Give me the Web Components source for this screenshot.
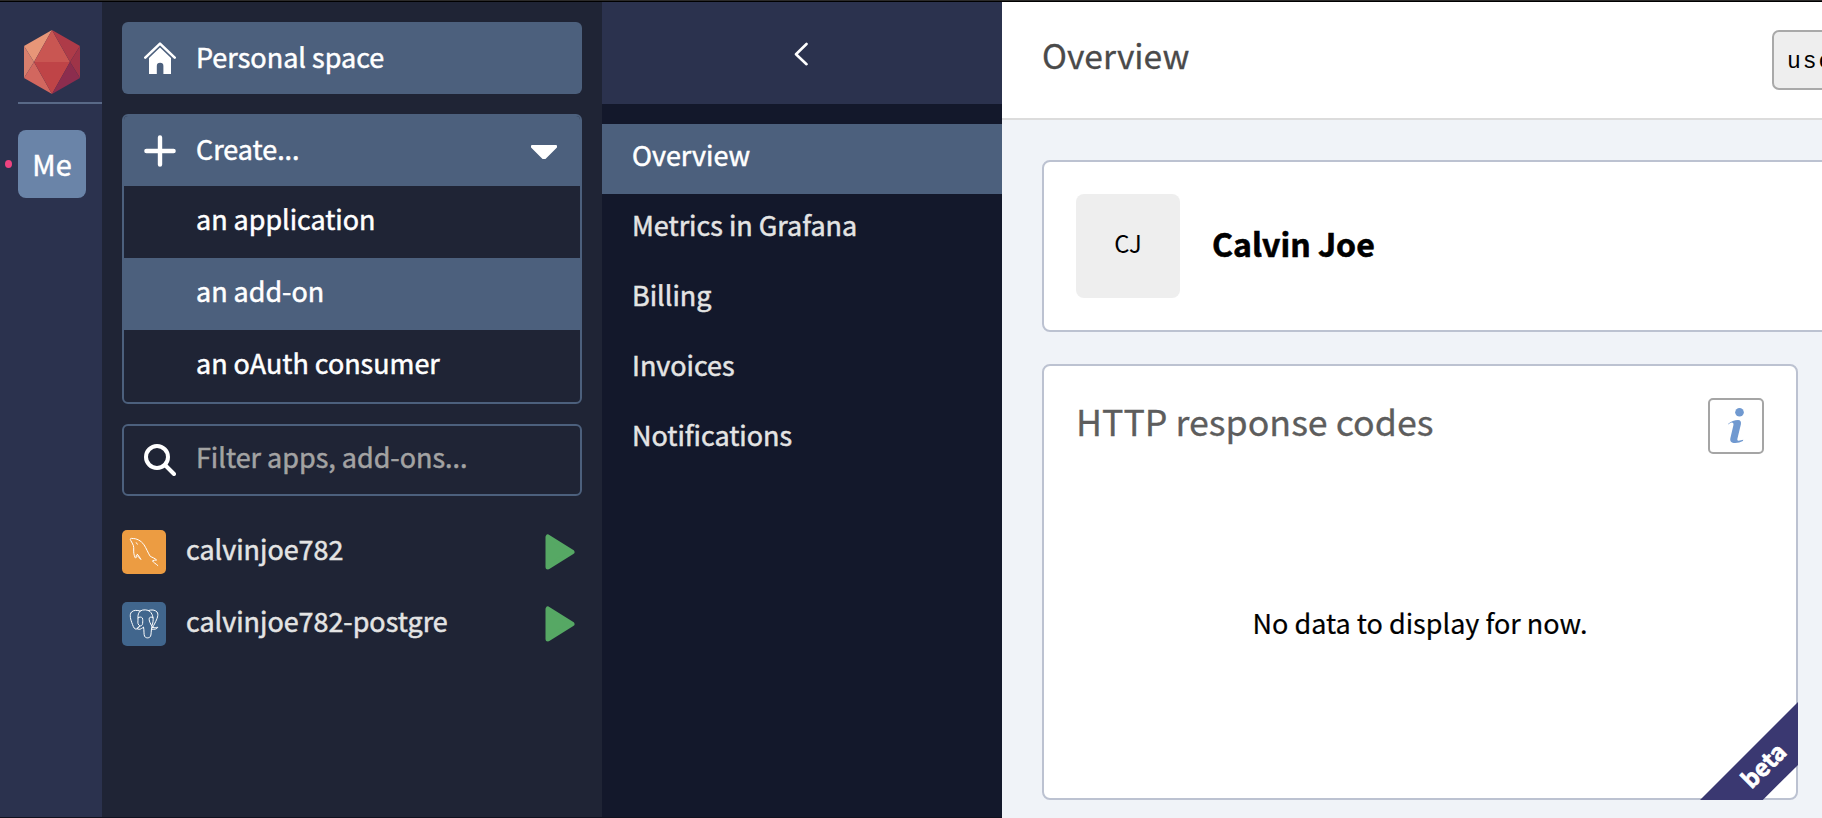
<!DOCTYPE html>
<html lang="en">
<head>
<meta charset="utf-8">
<title>Overview</title>
<style>
html,body{margin:0;height:100%;overflow:hidden}
body{font-family:"Noto Sans CJK SC","Noto Sans",sans-serif}
</style>
</head>
<body>
<console-app></console-app>
<script>
const define=(name,html)=>customElements.define(name,class extends HTMLElement{
  constructor(){super();const t=document.createElement('template');t.innerHTML=html;
  this.attachShadow({mode:'open'}).append(t.content.cloneNode(true));}
});

define('org-rail',`<style>
:host{display:flex;flex-direction:column;width:102px;background:#2b324e;flex:none;-webkit-text-stroke:.5px}
.logo{width:56px;height:64px;margin:28px 0 8px 24px;display:block}
hr{margin:0 0 26px 18px;border:0;height:2px;background:#596987}
.row{display:flex;align-items:center}
.dot{width:7px;height:8px;border-radius:50%;background:#ee4380;margin:-1px 6px 0 5px}
.me{width:68px;height:68px;box-sizing:border-box;border-radius:8px;background:#6a84a8;color:#fff;font-size:28.8px;line-height:68px;text-align:center}
</style>
<svg class="logo" viewBox="0 0 56 64"><path fill="#e79678" d="M28 0 0 16l10 16z"/><path fill="#d87f6d" d="M0 16v32l10-16z"/><path fill="#d2675f" d="M0 48l10-16 18 32z"/><path fill="#c95652" d="M28 0 10 32h36z"/><path fill="#bf4447" d="M10 32h36L28 64z"/><path fill="#ae3b48" d="M28 0l28 16-10 16z"/><path fill="#9f3448" d="M56 16v32L46 32z"/><path fill="#8c2d4e" d="M56 48 46 32 28 64z"/></svg>
<hr><div class="row"><span class="dot"></span><div class="me">Me</div></div>`);

define('space-button',`<style>
:host{display:flex;align-items:center;height:72px;box-sizing:border-box;background:#4c607d;border-radius:6px;color:#fff;padding-left:22px}
svg{width:32px;height:32px;margin-right:20px}
span{font-size:27px;line-height:68px;padding-bottom:3px}
</style>
<svg viewBox="0 0 32 32"><path fill="none" stroke="#fff" stroke-width="2.6" stroke-linecap="round" stroke-linejoin="round" d="M1.3 15.6 16 1.6l14.7 14"/><path fill="#fff" d="M16 5.4 5 16v16h7.800v-8a3.200 3.200 0 0 1 6.600 0v8H27V16z"/></svg><span><slot></slot></span>`);

define('create-menu',`<style>
:host{display:block;border:2px solid #4c607d;border-radius:6px;box-sizing:border-box;height:290px;color:#fff;overflow:hidden}
.head{display:flex;align-items:center;height:70px;background:#4c607d;padding:0 22px 0 20px}
.plus{width:32px;height:32px;margin-right:20px}
.head span{flex:1}
span{display:block;font-size:26.900px;line-height:66px;padding-bottom:4px}
.caret{width:28px;height:16px;margin-top:2px}
.item{height:72px;padding-left:72px}
.item span{line-height:66px}
.on{background:#4c607d}
</style>
<div class="head"><svg class="plus" viewBox="0 0 32 32"><path stroke="#fff" stroke-width="4.400" stroke-linecap="round" d="M16 2.400v27.200M2.400 16h27.200"/></svg><span>Create...</span>
<svg class="caret" viewBox="0 0 28 16"><path fill="#fff" stroke="#fff" stroke-width="2" stroke-linejoin="round" d="M2 2h24v1L15 14h-2L2 3z"/></svg></div>
<div class="item"><span>an application</span></div><div class="item on"><span>an add-on</span></div><div class="item"><span>an oAuth consumer</span></div>`);

define('filter-box',`<style>
:host{display:flex;align-items:center;height:72px;box-sizing:border-box;border:2px solid #4c607d;border-radius:6px;color:#a3a3a3;padding-left:20px}
svg{width:32px;height:32px;margin-right:20px}
span{font-size:26.950px;line-height:62px;padding-bottom:6px}
</style>
<svg viewBox="0 0 32 32" fill="none" stroke="#fff" stroke-width="4" stroke-linecap="round"><circle cx="13" cy="13" r="11"/><path d="M21 21l9 9"/></svg><span><slot></slot></span>`);

define('app-row',`<style>
:host{display:flex;align-items:center;height:72px;color:#e4e4e4}
.icon{width:44px;height:44px;margin-right:20px;display:flex}
span{flex:1;font-size:26.900px;line-height:62px;padding-bottom:6px}
.play{width:30px;height:36px;margin-right:7px}
</style>
<div class="icon"><slot name="icon"></slot></div><span><slot></slot></span>
<svg class="play" viewBox="0 0 30 36"><path fill="#56a864" stroke="#56a864" stroke-width="5" stroke-linejoin="round" d="M3 3v30l24-15z"/></svg>`);

define('mysql-icon',`<style>:host{display:block;width:44px;height:44px;background:#ec9c42;border-radius:5px}svg{display:block}</style>
<svg width="44" height="44" viewBox="0 0 44 44" fill="none" stroke="#fff" stroke-width="1" stroke-linejoin="round" stroke-linecap="round"><path d="M10.500 8.500c-2-.6-2.800.4-1.800 1.900 1.200 2 1.900 3.400 2.600 5 .5 1.500.5 2.700.4 4.600-.1 2.600.2 4.900 1.400 7.500.6 1 1 .6 1.100-.4.100-.9 0-1.600.2-2.100 1.500 1 2.600 2.500 4.500 4.500-1-2.200-2.300-3.900-3.600-5.300M10.500 8.500c3.800-.2 8.500 2 11.500 6.300 2.400 3.500 4.200 8.600 6.300 11.600 2.200 1.100 4.500 1.800 6.300 3.600-1.600.2-3.100.1-4.100.8.700 1.700 3.500 3 5.300 4.700M14.300 12.700l1 1.500"/></svg>`);

define('postgres-icon',`<style>:host{display:block;width:44px;height:44px;background:#41668d;border-radius:5px}svg{display:block}</style>
<svg width="44" height="44" viewBox="0 0 44 44" fill="none" stroke="#fff" stroke-width="1" stroke-linejoin="round" stroke-linecap="round"><path d="M18 9c-3-1-6.500-1-8.500 1-2.300 2.500-1 7.500 1 12.500 1 3 2.200 4.800 3.600 4.600 1.200-.2 2.400-2 3.400-3.100M18.500 8.800C21 7.200 26 7.600 28 9.500c3 3 4.500 8.500 1.800 14.500M18.500 8.800c-2 1.600-2.800 4.200-2.500 7.200.2 3-.8 5.500.8 7 1.600 2 3.600.5 3.800-1.500.2-2.500.3-3.500-.2-5.500-1.200-1.300-3-1.200-4.300-.2M26.500 8.500c3-1 6.500-.8 8.500 1.500 2 2.500 0 7-2 11-1 2-2 3.600-2.600 4.800M31 15.500c-1.500-.9-3.500-.4-3.700.7-.4 2 .3 3.800 1.400 5.800.6 1.200 1.200 2.500 2.200 3.500 1.600.6 3.600-.3 4.900-.2-1 1.900-3.600 2.300-6 1.900M17.500 24c-.2 1.500-1 2-2.500 2.500 1.500 1.500 4 .9 6.500-1.500.8 3.600.1 7 1.100 9.300 1.300 2.100 4.400 2 5.800.2 1-1.500.5-5 1.400-9.500"/></svg>`);

define('resource-panel',`<style>
:host{display:flex;flex-direction:column;gap:20px;width:500px;flex:none;box-sizing:border-box;padding:20px;background:#1f2435;-webkit-text-stroke:.5px}
</style>
<space-button>Personal space</space-button><create-menu></create-menu><filter-box>Filter apps, add-ons...</filter-box>
<div><app-row><mysql-icon slot="icon"></mysql-icon>calvinjoe782</app-row><app-row><postgres-icon slot="icon"></postgres-icon>calvinjoe782-postgre</app-row></div>`);

define('nav-item',`<style>
:host{display:block;height:70px;box-sizing:border-box;padding-left:30px;font-size:26.950px;line-height:62px;color:#e4e4e4}
:host([active]){background:#4c607d;color:#fff}
</style><slot></slot>`);

define('section-nav',`<style>
:host{display:block;width:400px;flex:none;background:#13182b;-webkit-text-stroke:.5px}
.top{height:102px;background:#2b324e;margin-bottom:20px;display:flex;justify-content:center}
svg{width:16px;height:24px;margin:40px 2px 0 0}
</style>
<div class="top"><svg viewBox="0 0 16 24"><path fill="none" stroke="#fff" stroke-width="2.600" stroke-linecap="round" stroke-linejoin="round" d="M13.500 2 3 12.200l10.500 10"/></svg></div>
<nav-item active>Overview</nav-item><nav-item>Metrics in Grafana</nav-item><nav-item>Billing</nav-item><nav-item>Invoices</nav-item><nav-item>Notifications</nav-item>`);

define('page-header',`<style>
:host{display:flex;height:118px;box-sizing:border-box;background:#fff;border-bottom:2px solid #dcdcdc;padding-left:40px;overflow:hidden}
h1{margin:0;width:730px;flex:none;font-weight:400;font-size:33.600px;line-height:106px;color:#4a4a4a;-webkit-text-stroke:.3px}
.id{margin-top:28px;width:200px;height:60px;flex:none;box-sizing:border-box;border:2px solid #a9a9a9;border-radius:7px;background:#eee;padding-left:13px;font:23px/60px "Liberation Mono",monospace;letter-spacing:2px;color:#000}
</style><h1>Overview</h1><div class="id">use</div>`);

define('owner-card',`<style>
:host{display:flex;align-items:center;width:900px;height:172px;box-sizing:border-box;border:2px solid #bcc2d1;border-radius:8px;background:#fff;padding-left:32px;color:#000}
.av{width:104px;height:104px;border-radius:8px;background:#eee;text-align:center;font-size:23.800px;line-height:98px}
b{margin-left:32px;font-size:32px;line-height:60px;padding-bottom:6px;-webkit-text-stroke:.6px}
</style><div class="av">CJ</div><b>Calvin Joe</b>`);

define('beta-ribbon',`<style>
:host{display:block;position:absolute;right:-2px;bottom:-2px;width:98px;height:98px;clip-path:polygon(0 100%,100% 0,100% 64.300%,64% 100%)}
div{width:98px;height:98px;background:#3a3871;display:flex;align-items:center;justify-content:center}
span{color:#fff;font-weight:700;font-size:23.400px;line-height:30px;-webkit-text-stroke:.7px;transform:translate(14px,13.500px) rotate(-45deg)}
</style><div><span><slot></slot></span></div>`);

define('http-card',`<style>
:host{display:flex;flex-direction:column;position:relative;width:756px;height:436px;box-sizing:border-box;border:2px solid #bcc2d1;border-radius:8px;background:#fff;color:#000}
.head{display:flex;justify-content:space-between;padding:32px 32px 0}
h2{margin:0;font-weight:400;font-size:35.750px;line-height:46px;color:#5d5d5d;-webkit-text-stroke:.3px}
.info{width:52px;height:52px;border:2px solid #a5a5a5;border-radius:5px}
.info svg{display:block}
p{margin:134px 0 0;font-size:27px;line-height:70px;text-align:center;-webkit-text-stroke:.2px}
</style>
<div class="head"><h2>HTTP response codes</h2><div class="info"><svg width="52" height="52" viewBox="0 0 52 52" fill="#7099d0"><circle cx="29.500" cy="12.300" r="4.300"/><path d="M18 24c3-2.800 6.500-4 10-4 2.500 0 3.400 1.700 2.900 4.200l-3.500 14.600c-.3 1.500.2 2 1.300 1.900 1.400-.1 3-.9 4.600-.9l-.4 1.100c-2.500 1.300-4.700 2-7.700 2-4 0-5.500-1.700-4.800-5l3-12.700c.4-1.700-.2-2.600-1.600-2.700-1.300 0-2.300 1.300-3.600 1.900z"/></svg></div></div>
<p>No data to display for now.</p><beta-ribbon>beta</beta-ribbon>`);

define('console-app',`<style>
:host{display:flex;flex-direction:column;height:100vh;overflow:hidden}
.edge{height:1px;flex:none;background:#2b2a29;border-bottom:1px solid #000}
.body{display:flex;flex:1;min-height:0}
.side{display:flex;box-sizing:border-box;border-bottom:1px solid #10121f}
main{flex:1;min-width:0;background:#f0f3f8}
.cards{display:flex;flex-direction:column;gap:32px;padding:40px}
</style>
<div class="edge"></div><div class="body"><div class="side"><org-rail></org-rail><resource-panel></resource-panel><section-nav></section-nav></div>
<main><page-header></page-header><div class="cards"><owner-card></owner-card><http-card></http-card></div></main></div>`);
</script>
</body>
</html>
